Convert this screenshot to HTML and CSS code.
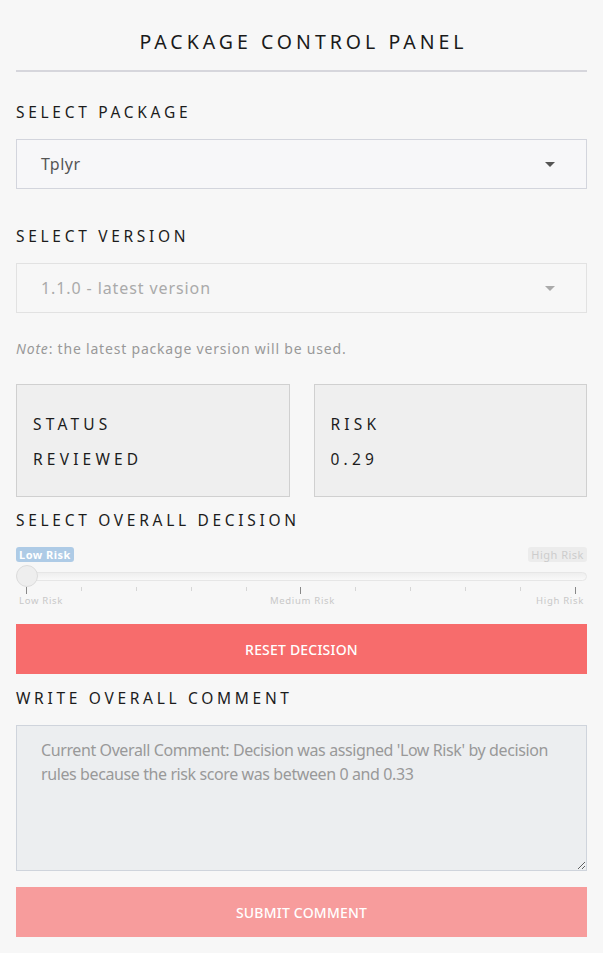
FILE: index.html
```html
<!DOCTYPE html>
<html>
<head>
<meta charset="utf-8">
<link rel="stylesheet" href="styles.css">
</head>
<body>
<div class="panel">
  <h1 class="title">PACKAGE CONTROL PANEL</h1>
  <hr class="rule">

  <div class="field">
    <div class="label">SELECT PACKAGE</div>
    <div class="select">
      <span>Tplyr</span>
      <span class="caret"></span>
    </div>
  </div>

  <div class="field">
    <div class="label">SELECT VERSION</div>
    <div class="select disabled">
      <span>1.1.0 - latest version</span>
      <span class="caret"></span>
    </div>
  </div>

  <p class="note"><em>Note</em>: the latest package version will be used.</p>

  <div class="cards">
    <div class="card">
      <div class="card-line">STATUS</div>
      <div class="card-line">REVIEWED</div>
    </div>
    <div class="card">
      <div class="card-line">RISK</div>
      <div class="card-line">0.29</div>
    </div>
  </div>

  <div class="label decision-label">SELECT OVERALL DECISION</div>
  <div class="slider">
    <div class="badges">
      <span class="badge badge-low">Low Risk</span>
      <span class="badge badge-high">High Risk</span>
    </div>
    <div class="track-wrap">
      <div class="track"></div>
      <div class="handle"></div>
    </div>
    <div class="ticks">
      <span class="tick major"></span><span class="tick"></span><span class="tick"></span><span class="tick"></span><span class="tick"></span><span class="tick major"></span><span class="tick"></span><span class="tick"></span><span class="tick"></span><span class="tick"></span><span class="tick major"></span>
    </div>
    <div class="tick-labels">
      <span class="tl-left">Low Risk</span>
      <span class="tl-mid">Medium Risk</span>
      <span class="tl-right">High Risk</span>
    </div>
  </div>

  <button class="btn btn-reset">RESET DECISION</button>

  <div class="label comment-label">WRITE OVERALL COMMENT</div>
  <textarea class="comment" placeholder="Current Overall Comment: Decision was assigned 'Low Risk' by decision rules because the risk score was between 0 and 0.33"></textarea>

  <button class="btn btn-submit">SUBMIT COMMENT</button>
</div>
</body>
</html>
```

FILE: styles.css
```css
* { box-sizing: border-box; }
html, body {
  margin: 0;
  background: #f7f7f7;
}
body {
  font-family: "Noto Sans", "Open Sans", sans-serif;
  color: #222;
}
.panel {
  padding: 27px 16px 16px;
  display: flex;
  flex-direction: column;
}
.title {
  margin: 0;
  text-align: center;
  font-weight: 400;
  font-size: 19.5px;
  letter-spacing: 4px;
  line-height: 30px;
  color: #1a1a1a;
  padding-left: 4px;
}
.rule {
  width: 100%;
  margin: 13px 0 0;
  border: 0;
  border-top: 2px solid #d6d6dc;
}
.label {
  font-size: 15.5px;
  letter-spacing: 3.7px;
  line-height: 22px;
  color: #1c1c1c;
}
.field { margin-top: 29px; }
.field + .field { margin-top: 36px; }
.select {
  margin-top: 16px;
  height: 50px;
  border: 1px solid #d3d5dd;
  background: #f7f7f9;
  display: flex;
  align-items: center;
  justify-content: space-between;
  padding: 0 31px 0 24px;
  font-size: 16px;
  color: #555;
  letter-spacing: 0.6px;
}
.caret {
  width: 0;
  height: 0;
  border-left: 5px solid transparent;
  border-right: 5px solid transparent;
  border-top: 5px solid #555;
}
.select.disabled {
  background: #f7f7f7;
  border-color: #e2e2e2;
  color: #aaa;
  letter-spacing: 0.9px;
}
.select.disabled .caret { border-top-color: #aaa; }
.note {
  margin: 26px 0 0;
  font-size: 14px;
  color: #999;
  letter-spacing: 0.8px;
  line-height: 20px;
}
.note em { color: #999; }
.cards {
  margin-top: 25px;
  display: grid;
  grid-template-columns: 1fr 1fr;
  gap: 24px;
}
.card {
  height: 113px;
  background: #efefef;
  border: 1px solid #d0d0d0;
  padding: 28px 16px 0;
  display: flex;
  flex-direction: column;
  gap: 13px;
}
.card-line {
  font-size: 15.5px;
  letter-spacing: 4.2px;
  line-height: 22px;
  color: #1c1c1c;
}
.decision-label { margin-top: 12px; }
.slider { margin-top: 16px; }
.badges {
  display: flex;
  justify-content: space-between;
}
.badge {
  font-size: 11px;
  line-height: 15px;
  padding: 0 3px;
  border-radius: 3px;
  letter-spacing: 0.5px;
  font-weight: 700;
}
.badge-low { background: #aecbe6; color: #fff; }
.badge-high { background: #ececec; color: #ccc; font-weight: 400; }
.track-wrap {
  position: relative;
  height: 24px;
  margin-top: 2px;
  display: flex;
  align-items: center;
}
.track {
  width: 100%;
  height: 9px;
  border-radius: 5px;
  border: 1px solid #e6e6e6;
  background: linear-gradient(#eeeeee, #f9f9f9);
}
.handle {
  position: absolute;
  left: 0;
  top: 1px;
  width: 22px;
  height: 22px;
  border-radius: 50%;
  background: #eeeeee;
  border: 1px solid #dcdcdc;
}
.ticks {
  display: flex;
  justify-content: space-between;
  padding: 0 11px 0 10px;
  height: 7px;
  margin-top: -1px;
}
.tick {
  width: 1px;
  height: 4px;
  background: #d6d6d6;
}
.tick.major {
  height: 7px;
  background: #888;
}
.tick-labels {
  display: grid;
  grid-template-columns: 1fr auto 1fr;
  padding: 0 3px;
  margin-top: 1px;
  font-size: 9.5px;
  letter-spacing: 0.7px;
  color: #c8c8c8;
  line-height: 12px;
}
.tl-mid { padding-left: 2px; }
.tl-right { text-align: right; }
.btn {
  display: block;
  width: 100%;
  height: 50px;
  border: 0;
  font-family: "Noto Sans", sans-serif;
  font-size: 14px;
  font-weight: 500;
  color: #fff;
  letter-spacing: 0.2px;
}
.btn-reset { background: #f76c6c; margin-top: 17px; }
.comment-label { margin-top: 13px; }
.comment {
  margin-top: 16px;
  width: 100%;
  height: 146px;
  background: #eceef0;
  border: 1px solid #cfd4dc;
  border-radius: 0;
  padding: 12px 24px;
  font-family: "Noto Sans", sans-serif;
  font-size: 16px;
  line-height: 24px;
  letter-spacing: -0.4px;
  color: #555;
  resize: vertical;
}
.comment::placeholder { color: #999; }
.btn-submit { background: #f79c9c; margin-top: 16px; }
```
